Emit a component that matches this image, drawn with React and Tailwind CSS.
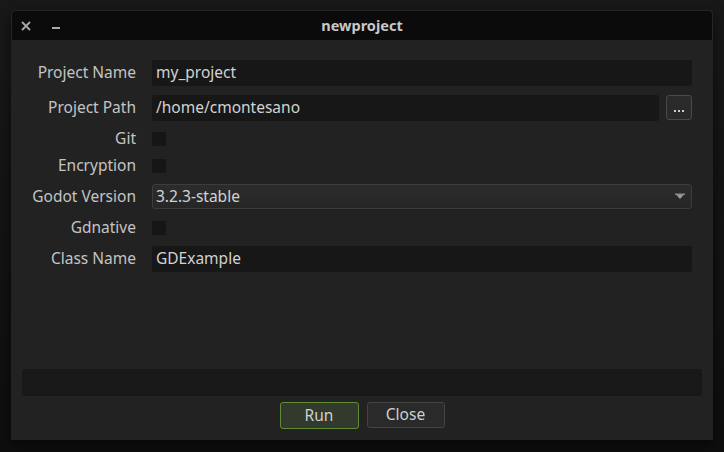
import React from 'react';

const font = { fontFamily: '"Noto Sans", "DejaVu Sans", sans-serif' };

const Label = ({ children }) => (
  <div className="flex items-center justify-end text-[15.5px] text-[#c4c4c4]">{children}</div>
);

const TextInput = ({ value }) => (
  <div className="flex h-[26px] flex-1 items-center rounded-[3px] bg-[#171717] px-[4px] text-[15.5px] text-[#d2d2d2]">
    {value}
  </div>
);

const Check = () => <div className="h-[14px] w-[14px] rounded-[1px] bg-[#161616]" />;

const App = () => {
  const rows = [
    { label: 'Project Name', h: 'h-[35px]', field: <TextInput value="my_project" /> },
    {
      label: 'Project Path',
      h: 'h-[35px]',
      field: (
        <div className="flex flex-1 items-center gap-[7px]">
          <TextInput value="/home/cmontesano" />
          <button className="flex h-[25px] w-[26px] items-end justify-center rounded-[3px] border border-[#4a4a4a] bg-[#2a2a2a] pb-[7px] text-[11px] leading-none text-[#cfcfcf]">
            <span className="flex gap-[2px]">
              <span className="h-[2px] w-[2px] bg-[#cfcfcf]" />
              <span className="h-[2px] w-[2px] bg-[#cfcfcf]" />
              <span className="h-[2px] w-[2px] bg-[#cfcfcf]" />
            </span>
          </button>
        </div>
      ),
    },
    { label: 'Git', h: 'h-[27px]', field: <Check /> },
    { label: 'Encryption', h: 'h-[27px]', field: <Check /> },
    {
      label: 'Godot Version',
      h: 'h-[35px]',
      field: (
        <div className="flex h-[25px] flex-1 items-center justify-between rounded-[3px] border border-[#3c3c3c] bg-gradient-to-b from-[#2c2c2c] to-[#262626] pl-[3px] pr-[6px] text-[15.5px] text-[#d2d2d2]">
          <span>3.2.3-stable</span>
          <svg width="10" height="8" viewBox="0 0 10 8">
            <rect x="0" y="0.5" width="10" height="1.5" fill="#8a8a8a" />
            <polygon points="1.5,2 8.5,2 5,6" fill="#9a9a9a" />
          </svg>
        </div>
      ),
    },
    { label: 'Gdnative', h: 'h-[27px]', field: <Check /> },
    { label: 'Class Name', h: 'h-[35px]', field: <TextInput value="GDExample" /> },
  ];

  return (
    <div className="flex h-[452px] w-[724px] justify-center bg-gradient-to-b from-[#191919] to-[#0e0e0e] pt-[10px]" style={font}>
      <div className="flex h-[430px] w-[702px] flex-col shadow-[0_4px_12px_rgba(0,0,0,0.6)]">
        <div className="relative flex h-[30px] items-center justify-center rounded-t-[5px] border-x border-t border-[#262626] bg-[#0b0b0b]">
          <svg className="absolute left-[9px] top-[10px]" width="10" height="10" viewBox="0 0 10 10">
            <path d="M1 1 L9 9 M9 1 L1 9" stroke="#a8a8a8" strokeWidth="1.8" />
          </svg>
          <div className="absolute left-[40px] top-[16px] h-[2px] w-[8px] bg-[#a8a8a8]" />
          <span className="text-[14.5px] font-bold text-[#c8c8c8]">newproject</span>
        </div>
        <div className="flex flex-1 flex-col bg-[#222222] px-[11px] pb-[11px] pt-[15px]">
          <div className="grid grid-cols-[114px_1fr] gap-x-[16px] pr-[10px]">
            {rows.map((r) => (
              <React.Fragment key={r.label}>
                <div className={`${r.h} flex justify-end`}>
                  <Label>{r.label}</Label>
                </div>
                <div className={`${r.h} flex items-center`}>{r.field}</div>
              </React.Fragment>
            ))}
          </div>
          <div className="flex-1" />
          <div className="h-[27px] rounded-[3px] bg-[#181818]" />
          <div className="mt-[6px] flex justify-center gap-[8px]">
            <button className="h-[27px] w-[79px] rounded-[3px] border border-[#5e8c34] bg-[#313a2c] text-[15.5px] text-[#cfcfcf]">
              Run
            </button>
            <button className="h-[26px] w-[78px] rounded-[3px] border border-[#444444] bg-[#2a2a2a] text-[15.5px] text-[#cfcfcf]">
              Close
            </button>
          </div>
        </div>
      </div>
    </div>
  );
};

export default App;
